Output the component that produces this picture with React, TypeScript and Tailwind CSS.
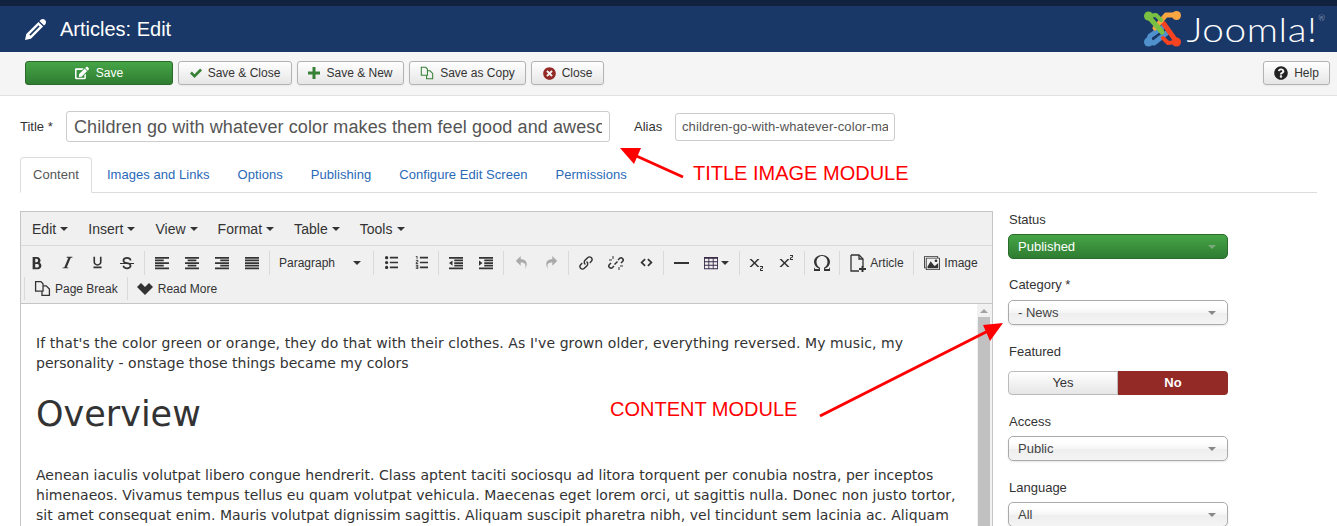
import type { ReactNode } from 'react';
import {
  ImBold, ImItalic, ImUnderline, ImStrikethrough, ImParagraphLeft, ImParagraphCenter, ImParagraphRight,
  ImParagraphJustify, ImList2, ImListNumbered, ImIndentDecrease, ImIndentIncrease, ImUndo2, ImRedo2,
  ImLink, ImEmbed, ImTable2, ImSubscript, ImSuperscript, ImOmega, ImImages, ImPencil, ImCheckmark,
  ImPlus,
} from 'react-icons/im';
import { FaEdit, FaTimesCircle, FaQuestionCircle } from 'react-icons/fa';

const Caret = ({ className = 'border-t-[#333]' }: { className?: string }) => (
  <span className={`inline-block w-0 h-0 border-x-4 border-x-transparent border-t-4 ${className}`} />
);

const ToolBtn = ({ label, icon, className = '' }: { label: string; icon: ReactNode; className?: string }) => (
  <button className={`flex items-center justify-center gap-1 h-[24px] bg-[#f0f0f0] text-[12px] text-[#333] ${className}`}>
    {icon}
    {label && <span>{label}</span>}
  </button>
);

const Ico = ({ children }: { children: ReactNode }) => (
  <button className="flex items-center justify-center w-[30px] h-[24px] text-[#333] text-[14px]">{children}</button>
);

const Group = ({ children, first }: { children: ReactNode; first?: boolean }) => (
  <div className={first ? 'flex' : 'flex ml-[2px] pl-[2px] border-l border-[#d9d9d9]'}>{children}</div>
);

const PageIcon = ({ plus }: { plus?: boolean }) => (
  <svg width="17" height="18" viewBox="0 0 17 18" fill="none" stroke="#333" strokeWidth="1.3">
    <path d="M2 1h8l4 4v8M10 17H2V1" />
    <path d="M10 1v4h4" />
    {plus && <path d="M10 15h7M13.5 12v6" stroke="#333" strokeWidth="2" />}
  </svg>
);

const CopyIcon = ({ size = 16, color = '#333' }: { size?: number; color?: string }) => (
  <svg width={size} height={size} viewBox="0 0 16 16" fill="none" stroke={color} strokeWidth="1.2">
    <path d="M1.5 1.5h5l2 2v7h-7z" />
    <path d="M8.5 5.5h3l3 3v6h-7v-4" />
  </svg>
);

const ActionBtn = ({ children, className = '' }: { children: ReactNode; className?: string }) => (
  <button
    className={`flex items-center justify-center gap-[6px] h-[24px] rounded-[3px] border border-[#b3b3b3] bg-linear-to-b from-white to-[#e6e6e6] text-[12px] text-[#333] shadow-[0_1px_2px_rgba(0,0,0,0.05)] ${className}`}
  >
    {children}
  </button>
);

const ChosenSelect = ({ value }: { value: string }) => (
  <div className="flex items-center justify-between w-[220px] h-[25px] pl-[9px] pr-[11px] rounded-[5px] border border-[#aaa] bg-[linear-gradient(#fff_20%,#f6f6f6_50%,#eee_52%,#f4f4f4_100%)] shadow-[0_1px_2px_rgba(0,0,0,0.1)] text-[13px] text-[#444]">
    <span>{value}</span>
    <Caret className="border-t-[#888]" />
  </div>
);

const SideLabel = ({ children }: { children: ReactNode }) => (
  <div className="h-[15px] pl-px text-[13px] leading-[15px] text-[#333]">{children}</div>
);

const JoomlaLogo = () => (
  <svg width="38" height="38" viewBox="0 0 38 38" fill="none" strokeLinecap="round" strokeLinejoin="round">
    <path d="M4 32L10 33L24 22" stroke="#5091cd" strokeWidth="5" />
    <path d="M4 32L6 26L19 17" stroke="#5091cd" strokeWidth="5" />
    <path d="M32 31L20 14" stroke="#f44321" strokeWidth="5" />
    <path d="M32 32L24 33L19 28" stroke="#f44321" strokeWidth="4" />
    <path d="M32 5L22 5L11 18" stroke="#f9a541" strokeWidth="5" />
    <path d="M4 6L18 22" stroke="#7ac143" strokeWidth="5" />
    <path d="M4 6L12 5L17 10" stroke="#7ac143" strokeWidth="4" />
    <circle cx="4.5" cy="6" r="4.5" fill="#7ac143" />
    <circle cx="32.5" cy="5.5" r="4.5" fill="#f9a541" />
    <circle cx="4.5" cy="32" r="4.5" fill="#5091cd" />
    <circle cx="32.5" cy="32" r="4.5" fill="#f44321" />
  </svg>
);

const tabs = ['Images and Links', 'Options', 'Publishing', 'Configure Edit Screen', 'Permissions'];
const menus = ['Edit', 'Insert', 'View', 'Format', 'Table', 'Tools'];

export default function App() {
  return (
    <div className="relative h-[526px] w-[1337px] overflow-hidden bg-white font-['Liberation_Sans',Arial,sans-serif] text-[#333]">
      {/* header */}
      <div className="h-[6px] bg-[#10223e]" />
      <header className="flex items-center justify-between h-[46px] pl-[25px] pr-[12px] bg-[#1a3867]">
        <div className="flex items-center gap-[14px] text-white">
          <ImPencil className="text-[21px]" />
          <h1 className="text-[20px] leading-none">Articles: Edit</h1>
        </div>
        <div className="flex items-center gap-[24px]">
          <JoomlaLogo />
          <span className="relative pr-[7px] font-['Lato',sans-serif] font-light text-[33px] leading-none text-white">
            <span className="inline-block origin-right scale-x-[1.175] tracking-[0.5px]">Joomla!</span>
            <span className="absolute right-0 top-[1px] text-[8px] text-[#ccd]">®</span>
          </span>
        </div>
      </header>

      {/* actions */}
      <div className="flex items-start justify-between h-[44px] pt-[9px] pl-[25px] pr-[7px] bg-[#f5f5f5] border-b border-[#e1e1e1]">
        <div className="flex items-center gap-[5px]">
          <button className="flex items-center justify-center gap-[7px] w-[148px] h-[24px] rounded-[3px] border border-[#2a6a2b] bg-linear-to-b from-[#46a546] to-[#2f7d32] text-[12px] text-white">
            <FaEdit className="text-[14px]" />
            Save
          </button>
          <ActionBtn className="w-[114px]"><ImCheckmark className="text-[12px] text-[#378137]" />Save &amp; Close</ActionBtn>
          <ActionBtn className="w-[107px]"><ImPlus className="text-[12px] text-[#378137]" />Save &amp; New</ActionBtn>
          <ActionBtn className="w-[117px]"><CopyIcon size={14} color="#378137" />Save as Copy</ActionBtn>
          <ActionBtn className="w-[73px]"><FaTimesCircle className="text-[13px] text-[#942a25]" />Close</ActionBtn>
        </div>
        <ActionBtn className="w-[67px]"><FaQuestionCircle className="text-[14px] text-[#222]" />Help</ActionBtn>
      </div>

      {/* title row */}
      <div className="flex items-center h-[31px] mt-[15px] pl-[20px]">
        <label className="w-[46px] text-[13px]">Title *</label>
        <input
          readOnly
          value="Children go with whatever color makes them feel good and awesome"
          className="w-[544px] h-[31px] px-[7px] pt-[2px] rounded-[3px] border border-[#ccc] text-[18px] tracking-[0.1px] text-[#555] outline-none"
        />
        <label className="ml-[24px] w-[41px] text-[13px]">Alias</label>
        <input
          readOnly
          value="children-go-with-whatever-color-makes-them-feel-good"
          className="w-[220px] h-[28px] px-[6px] rounded-[3px] border border-[#ccc] text-[13px] tracking-[0.1px] text-[#555] outline-none"
        />
      </div>

      {/* tabs */}
      <nav className="flex items-end h-[36px] mt-[15px] ml-[20px] mr-[20px] border-b border-[#ddd] text-[13px] tracking-[0.05px]">
        <a className="flex items-center h-[36px] -mb-px px-[12px] rounded-t-[4px] border border-[#ddd] border-b-white bg-white text-[#555]">Content</a>
        <div className="flex items-center h-[35px] ml-[15px] gap-[28px] text-[#2a69b8]">
          {tabs.map((t) => (
            <a key={t}>{t}</a>
          ))}
        </div>
      </nav>

      <div className="flex mt-[18px] ml-[20px]">
        {/* editor */}
        <div className="w-[973px] h-[400px] border border-[#c5c5c5] border-b-0">
          <div className="flex items-center h-[34px] pt-[1px] pl-[2px] bg-[#f0f0f0] border-b border-[#d9d9d9] text-[14px] tracking-[0.025px] text-[#333]">
            <div className="flex items-center gap-[20px] pl-[9px]">
              {menus.map((m) => (
                <span key={m} className="flex items-center gap-[4px]">{m}<Caret /></span>
              ))}
            </div>
          </div>
          <div className="h-[58px] pt-[3px] pl-[1px] bg-[#f0f0f0] border-b border-[#c5c5c5]">
            <div className="flex h-[27px] items-center">
              <Group first>
                <Ico><ImBold className="text-[14px]" /></Ico>
                <Ico><ImItalic className="text-[13px]" /></Ico>
                <Ico><ImUnderline className="text-[13px]" /></Ico>
                <Ico><ImStrikethrough className="text-[14px]" /></Ico>
              </Group>
              <Group>
                <Ico><ImParagraphLeft /></Ico>
                <Ico><ImParagraphCenter /></Ico>
                <Ico><ImParagraphRight /></Ico>
                <Ico><ImParagraphJustify /></Ico>
              </Group>
              <Group>
                <div className="flex items-center justify-between w-[99px] h-[24px] pl-[7px] pr-[10px] text-[12px] text-[#333]">
                  Paragraph
                  <Caret />
                </div>
              </Group>
              <Group>
                <Ico><ImList2 className="text-[13px]" /></Ico>
                <Ico><ImListNumbered className="text-[13px]" /></Ico>
              </Group>
              <Group>
                <Ico><ImIndentDecrease /></Ico>
                <Ico><ImIndentIncrease /></Ico>
              </Group>
              <Group>
                <Ico><ImUndo2 className="text-[#aaa] text-[13px]" /></Ico>
                <Ico><ImRedo2 className="text-[#aaa] text-[13px]" /></Ico>
              </Group>
              <Group>
                <Ico><ImLink className="text-[14px]" /></Ico>
                <Ico>
                  <svg width="16" height="16" viewBox="0 0 16 16" fill="none" stroke="#333" strokeWidth="1.5">
                    <path d="M6 11l-1.5 1.5a2 2 0 0 1-3-3L3 8M10 5l1.5-1.5a2 2 0 0 1 3 3L13 8M6.5 9.5L9.5 6.5" />
                    <path d="M5 1v3M1 5h3M11 12v3M12 11h3" strokeWidth="1" />
                  </svg>
                </Ico>
                <Ico><ImEmbed className="text-[13px]" /></Ico>
              </Group>
              <Group>
                <Ico><span className="block w-[15px] h-[2px] bg-[#333]" /></Ico>
                <button className="flex items-center justify-center gap-[3px] w-[41px] h-[24px]">
                  <ImTable2 className="text-[14px] text-[#3a2a48]" />
                  <Caret />
                </button>
              </Group>
              <Group>
                <Ico><ImSubscript className="text-[16px]" /></Ico>
                <Ico><ImSuperscript className="text-[16px]" /></Ico>
              </Group>
              <Group>
                <Ico><ImOmega className="text-[16px]" /></Ico>
              </Group>
              <Group>
                <ToolBtn className="w-[69px]" label="Article" icon={<PageIcon plus />} />
              </Group>
              <Group>
                <ToolBtn className="w-[69px] pl-[1px] gap-[4px]" label="Image" icon={<ImImages className="text-[16px]" />} />
              </Group>
            </div>
            <div className="flex h-[25px] items-center ml-[2px]">
              <div className="flex items-center gap-[4px] h-[23px] pl-[9px] pr-[9px] border-l border-[#d9d9d9] text-[12px]">
                <CopyIcon size={17} />
                Page Break
              </div>
              <div className="flex items-center gap-[5px] h-[23px] pl-[9px] border-l border-[#d9d9d9] text-[12px]">
                <svg width="16" height="12" viewBox="0 0 16 12" fill="#333">
                  <path d="M0 4L4 0L8 4L12 0L16 4L8 12Z" />
                </svg>
                Read More
              </div>
            </div>
          </div>

          <div className="flex h-[300px]">
            <div className="flex-1 pt-[29px] pl-[15px] font-['DejaVu_Sans',sans-serif] text-[14px] leading-[20px] text-[#333] whitespace-nowrap overflow-hidden">
              <p>
                <span className="tracking-[0.08px]">
                  If that's the color green or orange, they do that with their clothes. As I've grown older, everything reversed. My music, my
                </span>
                <br />
                personality - onstage those things became my colors
              </p>
              <h2 className="mt-[19px] mb-[29px] text-[35px] leading-[44px]">Overview</h2>
              <p className="tracking-[0.03px]">
                Aenean iaculis volutpat libero congue hendrerit. Class aptent taciti sociosqu ad litora torquent per conubia nostra, per inceptos
                <br />
                himenaeos. Vivamus tempus tellus eu quam volutpat vehicula. Maecenas eget lorem orci, ut sagittis nulla. Donec non justo tortor,
                <br />
                sit amet consequat enim. Mauris volutpat dignissim sagittis. Aliquam suscipit pharetra nibh, vel tincidunt sem lacinia ac. Aliquam
              </p>
            </div>
            <div className="flex flex-col w-[15px] pl-[1px] pr-[2px] bg-[#f1f1f1]">
              <div className="flex items-center justify-center h-[13px]">
                <span className="w-0 h-0 border-x-4 border-x-transparent border-b-4 border-b-[#a3a3a3]" />
              </div>
              <div className="flex-1 bg-[#c1c1c1]" />
            </div>
          </div>
        </div>

        {/* side column */}
        <aside className="ml-[15px] pt-[1px]">
          <SideLabel>Status</SideLabel>
          <div className="flex items-center justify-between w-[220px] h-[25px] mt-[7px] pl-[9px] pr-[11px] rounded-[5px] border border-[#2a6a2b] bg-linear-to-b from-[#46a546] to-[#2f7d32] text-[13px] text-white">
            <span>Published</span>
            <Caret className="border-t-[#7aa87a]" />
          </div>
          <div className="mt-[18px]">
            <SideLabel>Category *</SideLabel>
            <div className="mt-[8px]"><ChosenSelect value="- News" /></div>
          </div>
          <div className="mt-[19px]">
            <SideLabel>Featured</SideLabel>
            <div className="flex w-[220px] h-[24px] mt-[12px] text-[13px]">
              <span className="flex items-center justify-center w-[110px] rounded-l-[4px] border border-[#bbb] bg-linear-to-b from-white to-[#e6e6e6]">Yes</span>
              <span className="flex items-center justify-center w-[110px] rounded-r-[4px] bg-[#942a25] font-bold text-white">No</span>
            </div>
          </div>
          <div className="mt-[19px]">
            <SideLabel>Access</SideLabel>
            <div className="mt-[7px]"><ChosenSelect value="Public" /></div>
          </div>
          <div className="mt-[19px]">
            <SideLabel>Language</SideLabel>
            <div className="mt-[7px]"><ChosenSelect value="All" /></div>
          </div>
        </aside>
      </div>

      {/* annotations */}
      <span className="absolute left-[693px] top-[161px] text-[20px] leading-[24px] text-[#ff0000]">TITLE IMAGE MODULE</span>
      <span className="absolute left-[610px] top-[397px] text-[20px] leading-[24px] text-[#ff0000]">CONTENT MODULE</span>
      <svg className="absolute left-0 top-0 pointer-events-none" width="1337" height="526" fill="none">
        <path d="M683 177L632 154" stroke="#ff0000" strokeWidth="3" />
        <path d="M620 148L641 148L634 164Z" fill="#ff0000" />
        <path d="M820 416L988 331" stroke="#ff0000" strokeWidth="3" />
        <path d="M1003 323L990 341L983 325Z" fill="#ff0000" />
      </svg>
    </div>
  );
}
